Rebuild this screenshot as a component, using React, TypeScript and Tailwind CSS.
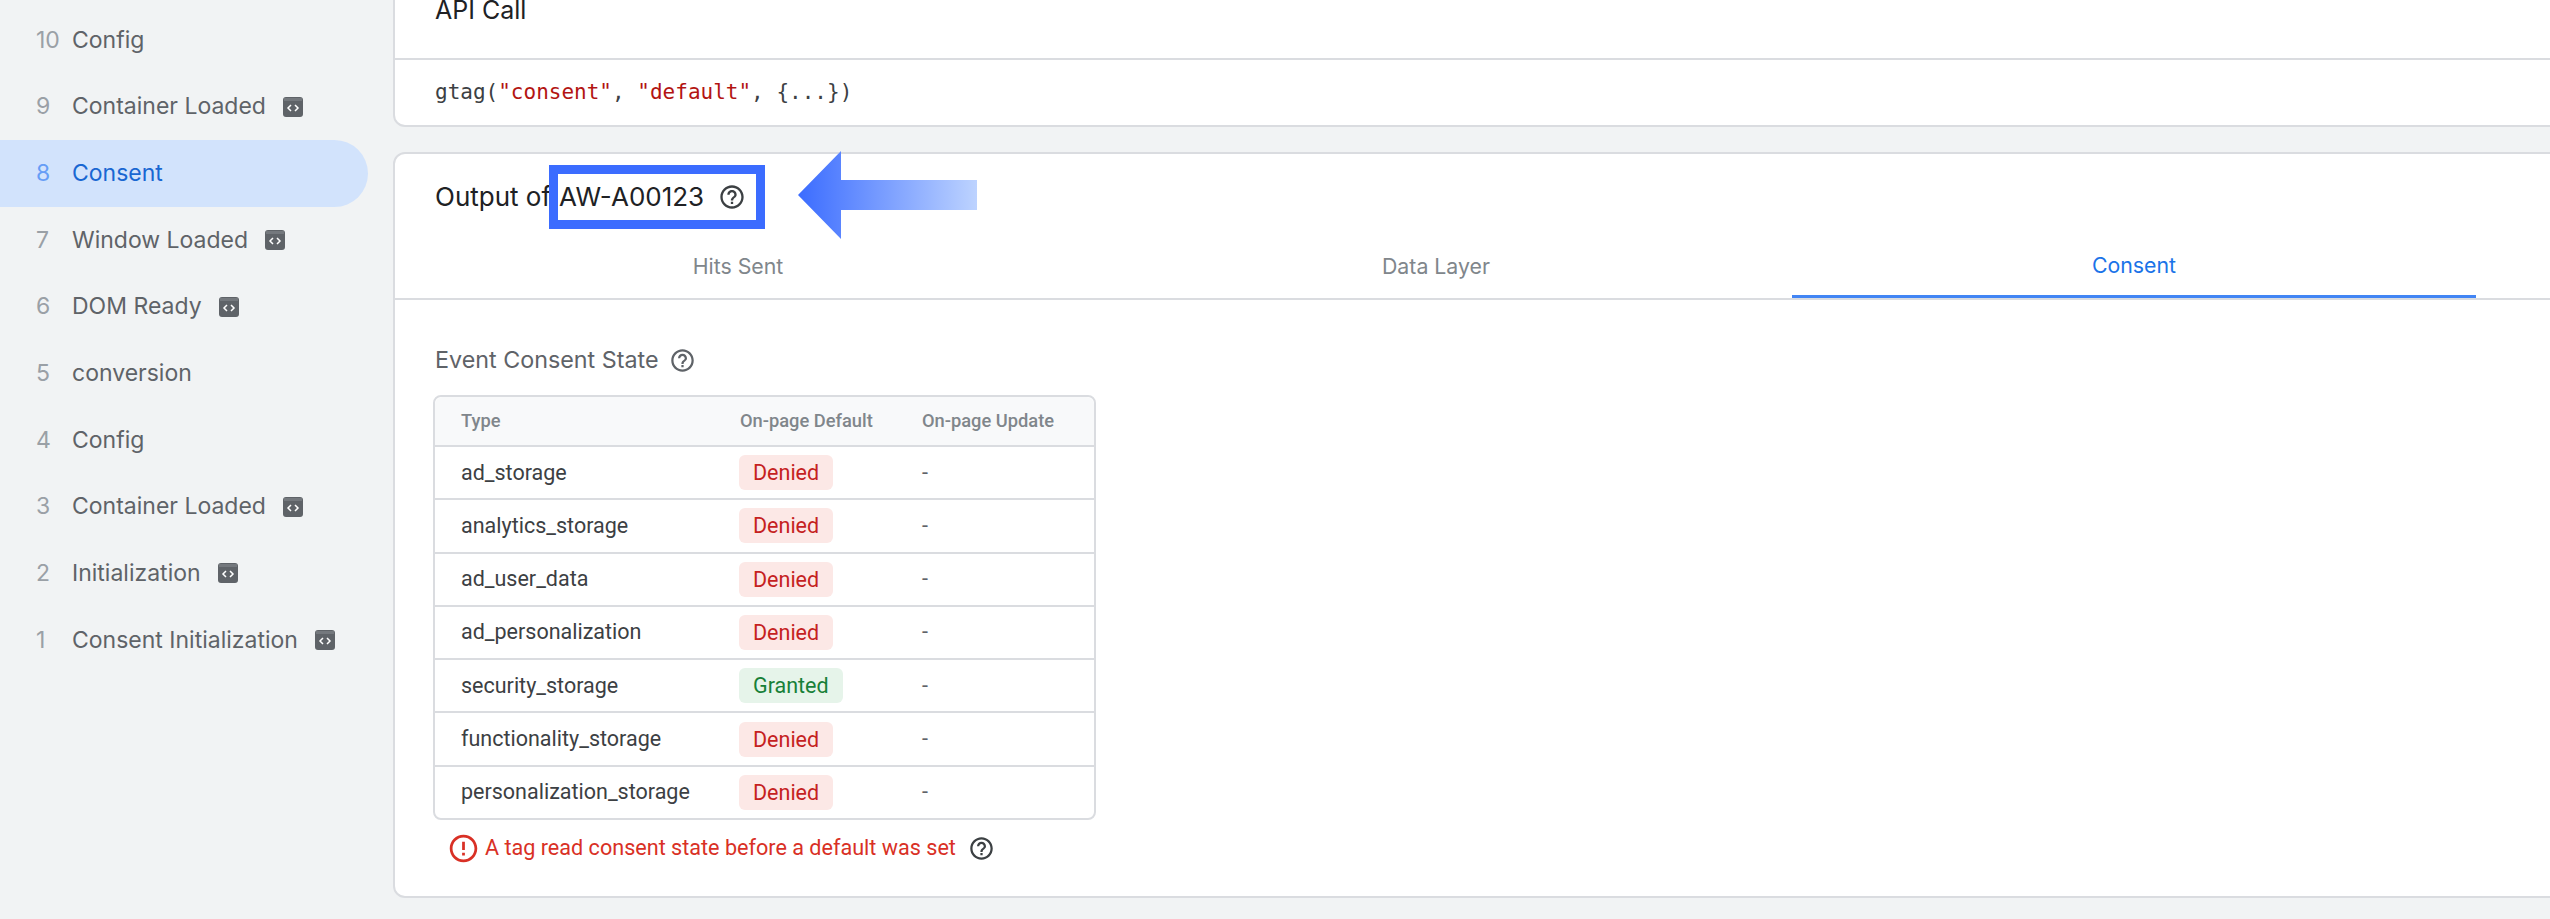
import React from "react";

const HELP =
  "M11 18h2v-2h-2v2zm1-16C6.48 2 2 6.48 2 12s4.48 10 10 10 10-4.48 10-10S17.52 2 12 2zm0 18c-4.41 0-8-3.59-8-8s3.59-8 8-8 8 3.59 8 8-3.59 8-8 8zm0-14c-2.21 0-4 1.79-4 4h2c0-1.1.9-2 2-2s2 .9 2 2c0 2-3 1.75-3 5h2c0-2.25 3-2.5 3-5 0-2.21-1.79-4-4-4z";
const ERROR =
  "M11 15h2v2h-2zm0-8h2v6h-2zm.99-5C6.47 2 2 6.48 2 12s4.47 10 9.99 10C17.52 22 22 17.52 22 12S17.52 2 11.99 2zM12 20c-4.42 0-8-3.58-8-8s3.58-8 8-8 8 3.58 8 8-3.58 8-8 8z";

const events = [
  { n: 10, name: "Config" },
  { n: 9, name: "Container Loaded", code: true },
  { n: 8, name: "Consent", active: true },
  { n: 7, name: "Window Loaded", code: true },
  { n: 6, name: "DOM Ready", code: true },
  { n: 5, name: "conversion" },
  { n: 4, name: "Config" },
  { n: 3, name: "Container Loaded", code: true },
  { n: 2, name: "Initialization", code: true },
  { n: 1, name: "Consent Initialization", code: true },
];

const rows = [
  { type: "ad_storage", granted: false },
  { type: "analytics_storage", granted: false },
  { type: "ad_user_data", granted: false },
  { type: "ad_personalization", granted: false },
  { type: "security_storage", granted: true },
  { type: "functionality_storage", granted: false },
  { type: "personalization_storage", granted: false },
];

const Icon = ({ d, className }: { d: string; className: string }) => (
  <svg viewBox="0 0 24 24" fill="currentColor" className={className}>
    <path d={d} />
  </svg>
);

const CodeBadge = () => (
  <svg viewBox="0 0 20 20" className="ml-[17px] h-[20px] w-[20px] shrink-0">
    <rect width="20" height="20" rx="3" fill="#5f6368" />
    <rect x="1" y="1" width="18" height="3" fill="#74787d" />
    <path d="M8 8l-3 3 3 3M12 8l3 3-3 3" fill="none" stroke="#fff" strokeWidth="1.5" />
  </svg>
);

const Sidebar = () => (
  <div className="w-[393px] shrink-0 pt-[6.67px] font-['Inter',sans-serif] text-[23px]">
    {events.map((e) => (
      <div
        key={e.n}
        className={
          e.active
            ? "flex h-[66.67px] w-[368px] items-center rounded-r-full bg-[#d2e3fc] text-[#1967d2]"
            : "flex h-[66.67px] w-[368px] items-center text-[#5f6368]"
        }
      >
        <span
          className={
            e.active ? "w-[72px] pl-[36px] text-[#669df6]" : "w-[72px] pl-[36px] text-[#9aa0a6]"
          }
        >
          {e.n}
        </span>
        <span>{e.name}</span>
        {e.code && <CodeBadge />}
      </div>
    ))}
  </div>
);

const ConsentTable = () => (
  <div className="mt-[22px] w-[663px] rounded-[8px] border-2 border-[#dadce0] font-['Roboto',sans-serif]">
    <div className="flex h-[48px] items-center rounded-t-[8px] bg-[#f8f9fa] text-[18.3px] font-medium text-[#80868b]">
      <span className="w-[305px] pl-[26px]">Type</span>
      <span className="w-[182px]">On-page Default</span>
      <span>On-page Update</span>
    </div>
    {rows.map((r) => (
      <div
        key={r.type}
        className="flex h-[53.3px] items-center border-t-2 border-[#dadce0] text-[21.5px] text-[#3c4043]"
      >
        <span className="w-[305px] pl-[26px]">{r.type}</span>
        <span className="w-[182px]">
          <span
            className={
              r.granted
                ? "-ml-[1px] inline-block h-[35px] rounded-[6px] bg-[#e6f4ea] px-[14px] leading-[35px] text-[#188038]"
                : "-ml-[1px] inline-block h-[35px] rounded-[6px] bg-[#fce8e6] px-[14px] leading-[35px] text-[#c5221f]"
            }
          >
            {r.granted ? "Granted" : "Denied"}
          </span>
        </span>
        <span className="text-[#5f6368]">-</span>
      </div>
    ))}
  </div>
);

const Annotation = () => (
  <>
    <div className="absolute left-[154px] top-[11px] h-[64px] w-[216px] border-[9px] border-[#3b6cff]" />
    <svg
      viewBox="0 0 180 88"
      className="absolute left-[403px] top-[-3px] h-[88px] w-[180px]"
    >
      <defs>
        <linearGradient id="arrowFill" x1="0" x2="1" y1="0" y2="0">
          <stop offset="0" stopColor="#3b6cff" />
          <stop offset="1" stopColor="#bdd3ff" />
        </linearGradient>
      </defs>
      <path d="M0 44 L43 0 V29 H179 V59 H43 V88 Z" fill="url(#arrowFill)" />
    </svg>
  </>
);

const tabs = ["Hits Sent", "Data Layer", "Consent"];

export default function App() {
  return (
    <div className="flex h-[919px] w-[2550px] overflow-hidden bg-[#f1f3f4]">
      <Sidebar />
      <div className="w-[2200px] shrink-0 font-['Inter',sans-serif]">
        <div className="-mt-[42px] h-[169px] rounded-[12px] border-2 border-[#dadce0] bg-white">
          <div className="flex h-[100px] items-center border-b-2 border-[#dadce0] pl-[40px] pt-[3px] text-[25px] text-[#202124]">
            API Call
          </div>
          <div className="flex h-[65px] items-center pl-[40px] font-['DejaVu_Sans_Mono',monospace] text-[21px] text-[#3c4043]">
            gtag(<span className="text-[#b31412]">"consent"</span>,&nbsp;
            <span className="text-[#b31412]">"default"</span>, {"{...}"})
          </div>
        </div>
        <div className="relative mt-[25px] h-[746px] rounded-[12px] border-2 border-[#dadce0] bg-white">
          <div className="flex h-[82px] items-center pl-[40px] pt-[3px] text-[26px] text-[#202124]">
            <span>Output of</span>
            <span className="ml-[8px]">AW-A00123</span>
            <Icon d={HELP} className="ml-[14px] h-[28px] w-[28px] text-[#3c4043]" />
          </div>
          <Annotation />
          <div className="flex h-[64px] gap-[14px] border-b-2 border-[#dadce0] pl-[1px] text-[21.3px]">
            {tabs.map((t) => (
              <div
                key={t}
                className={
                  t === "Consent"
                    ? "flex w-[684px] items-center justify-center border-b-[3px] border-[#4285f4] text-[#1a73e8]"
                    : "flex w-[684px] items-center justify-center text-[#80868b]"
                }
              >
                {t}
              </div>
            ))}
          </div>
          <div className="pl-[38px] pt-[47px]">
            <div className="flex h-[26px] items-center pl-[2px] text-[23.3px] text-[#5f6368]">
              Event Consent State
              <Icon d={HELP} className="ml-[11px] h-[27px] w-[27px]" />
            </div>
            <ConsentTable />
            <div className="ml-[14px] mt-[13px] flex h-[30px] items-center text-[21.6px] font-['Roboto',sans-serif] text-[#d93025]">
              <Icon d={ERROR} className="h-[33px] w-[33px]" />
              <span className="ml-[5px]">A tag read consent state before a default was set</span>
              <Icon d={HELP} className="ml-[12px] h-[27px] w-[27px] text-[#3c4043]" />
            </div>
          </div>
        </div>
      </div>
    </div>
  );
}
